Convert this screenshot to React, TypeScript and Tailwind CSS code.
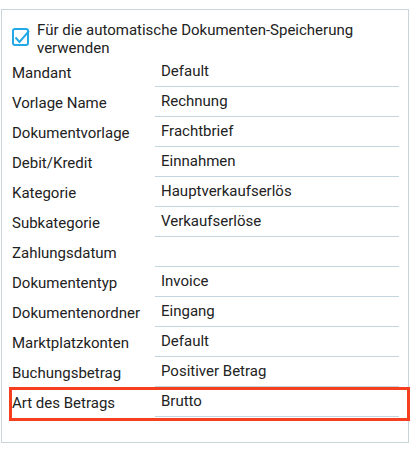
import React from "react";

const rows: [string, string][] = [
  ["Mandant", "Default"],
  ["Vorlage Name", "Rechnung"],
  ["Dokumentvorlage", "Frachtbrief"],
  ["Debit/Kredit", "Einnahmen"],
  ["Kategorie", "Hauptverkaufserlös"],
  ["Subkategorie", "Verkaufserlöse"],
  ["Zahlungsdatum", ""],
  ["Dokumententyp", "Invoice"],
  ["Dokumentenordner", "Eingang"],
  ["Marktplatzkonten", "Default"],
  ["Buchungsbetrag", "Positiver Betrag"],
  ["Art des Betrags", "Brutto"],
];

export default function App() {
  return (
    <div className="relative w-[412px] h-[451px] bg-white font-['Roboto',sans-serif] text-[15px] text-[#222222]">
      <div className="ml-[1px] pt-[9px]">
        <div className="w-[408px] h-[434px] border border-[#c8d5db] pt-[11px] pl-[10px]">
          <div className="flex items-start">
            <svg width="18" height="19" viewBox="0 0 18 19" className="mt-[7px] shrink-0 overflow-visible" fill="none">
              <rect x="1" y="1" width="15" height="16" rx="2" stroke="#24a8e6" strokeWidth="2" />
              <polyline points="3.5,9.5 7.5,14 17,3" stroke="#24a8e6" strokeWidth="2" strokeLinejoin="miter" />
            </svg>
            <div className="ml-[7px] leading-[18px]">
              Für die automatische Dokumenten-Speicherung
              <br />
              verwenden
            </div>
          </div>
          <div className="flex flex-col">
            {rows.map(([label, value]) => (
              <div key={label} className="flex h-[30px]">
                <div className="w-[143px] pt-[7px] leading-[18px] whitespace-nowrap">{label}</div>
                <div className="w-[244px] h-[30px] border-b border-[#c3d5df] pl-[6px] pt-[5px] leading-[18px] whitespace-nowrap">
                  {value}
                </div>
              </div>
            ))}
          </div>
        </div>
      </div>
      <div className="absolute left-[9px] top-[387px] w-[401px] h-[34px] border-[3px] border-[#f53f1f]" />
    </div>
  );
}
